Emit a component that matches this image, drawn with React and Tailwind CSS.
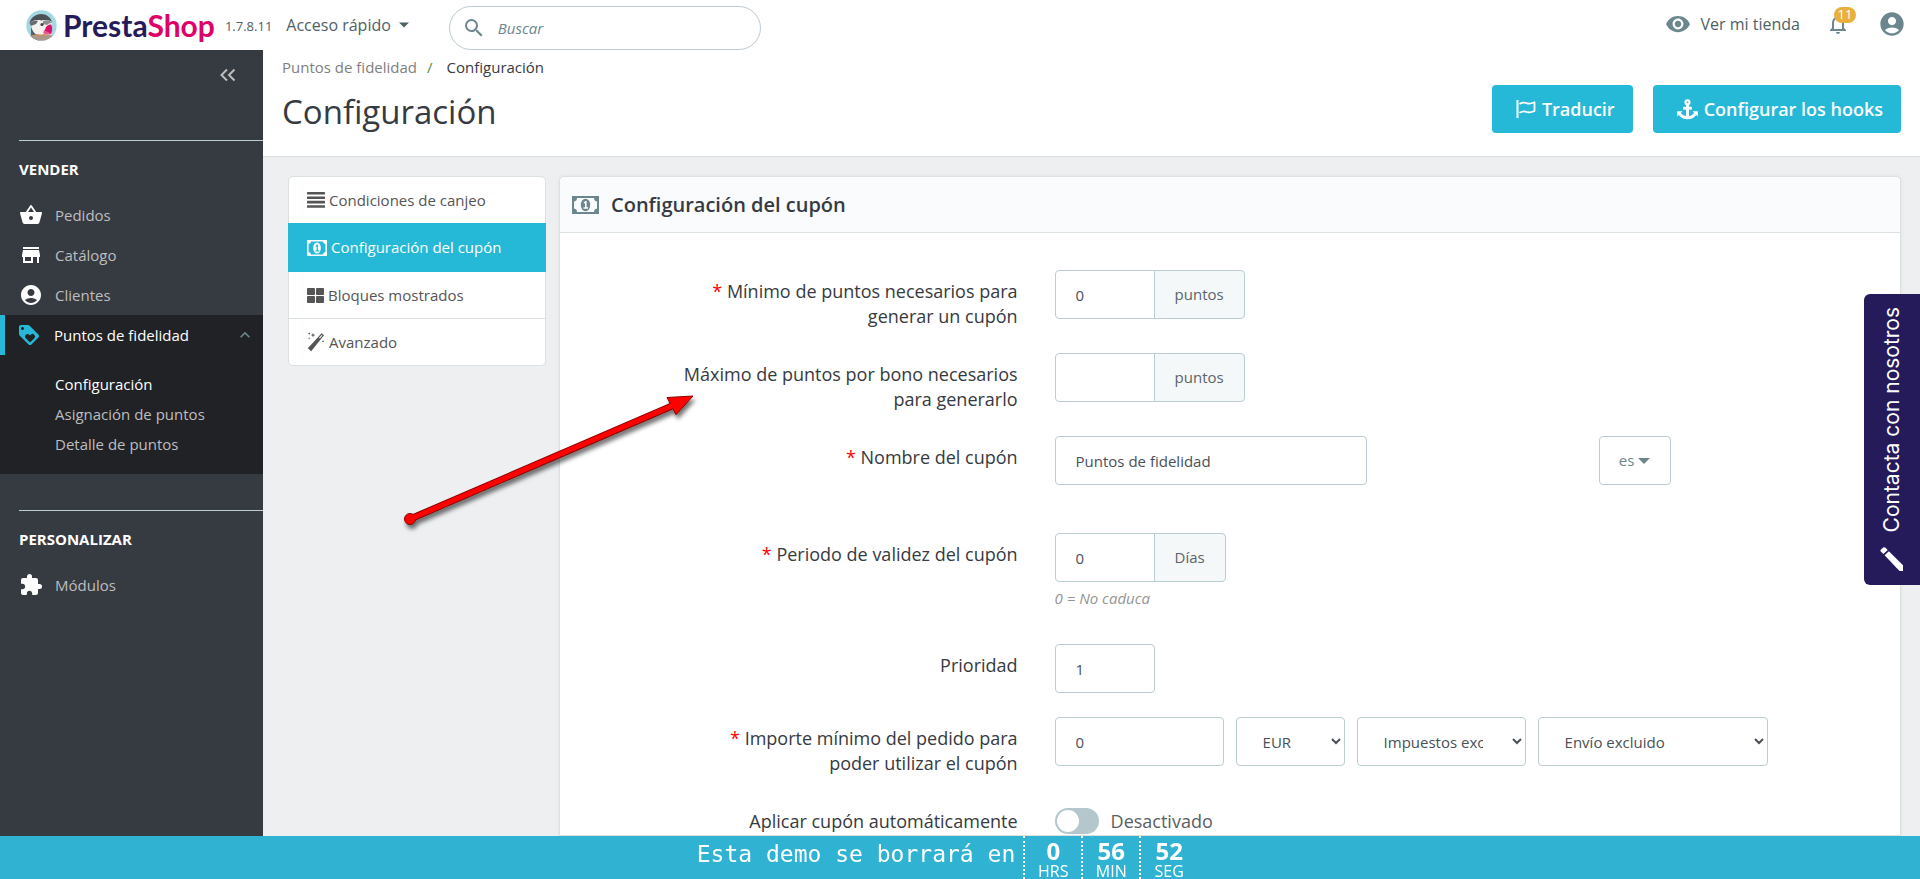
import {
  MdShoppingBasket,
  MdStore,
  MdAccountCircle,
  MdLoyalty,
  MdExtension,
  MdSearch,
  MdVisibility,
  MdNotificationsNone,
  MdKeyboardArrowUp,
} from "react-icons/md";
import { FaThLarge } from "react-icons/fa";

const inputClass =
  "h-[49px] rounded-[4px] border border-[#bbcdd2] bg-white px-5 text-[15px] text-[#495057] outline-none";
const selectClass =
  "h-[49px] rounded-[4px] border border-[#bbcdd2] bg-white pr-[26px] pl-[22px] text-[15px] text-[#495057] outline-none";

function LogoMark() {
  return (
    <svg viewBox="0 0 31 31" className="size-[31px]" aria-hidden="true">
      <defs>
        <clipPath id="disc">
          <circle cx="15.5" cy="15.5" r="15.2" />
        </clipPath>
      </defs>
      <g clipPath="url(#disc)">
        <rect width="31" height="31" fill="#a3d8e2" />
        <path d="M5 31V14c0-5 4-9.500 10-9.500 6.500 0 10.500 4 10.500 9v17z" fill="#f4f1ee" />
        <path d="M3.500 13C5 7.500 9.500 4 15 4c5.500 0 9.500 3 11 8-3-2-7-2.500-10.500-1.500C11 9.500 6.500 10.500 3.500 13z" fill="#4b5157" />
        <path d="M3.500 13c2.500-2 5.500-2.500 8.500-2l-2 3-5 2z" fill="#656b70" />
        <path d="M5 16c1 5 4 9 9 10l-1 5H5z" fill="#595f63" />
        <path d="M17 11c3-1.500 7-1 9 2-2 0-3.500.5-5 2l-4-1z" fill="#8d9092" />
        <circle cx="16" cy="14.500" r="1.600" fill="#3d4247" />
        <path d="M20 17c1.500-2 3-2.800 5-2.500 1.500 2 1.500 6 .2 9.500-3 .3-5.700-1-6.700-3z" fill="#d9136c" />
        <path d="M18 20c2.500 1.500 5 2 7.200 4-2 1-6 .8-8-1z" fill="#e9548e" />
        <path d="M3 25.500c6-1.500 18-1.500 25 0l-2 6H5z" fill="#a79a8c" />
        <path d="M9 26c1-1.500 3-1.500 4 0M16 26c1-1.500 3-1.500 4 0" stroke="#d9894c" strokeWidth="1.500" fill="none" />
      </g>
    </svg>
  );
}

function MoneyIcon({ className }) {
  return (
    <svg viewBox="0 0 27 18" className={className} aria-hidden="true">
      <path
        fill="currentColor"
        fillRule="evenodd"
        d="M0 0h27v18H0zM5 2a3.500 3.500 0 0 1-3 3.500v7A3.500 3.500 0 0 1 5 16h17a3.500 3.500 0 0 1 3-3.500v-7A3.500 3.500 0 0 1 22 2z"
      />
      <ellipse cx="13.500" cy="9" rx="4.700" ry="6.200" fill="currentColor" />
      <path d="M11.600 6.600 13.300 5h1.300v6.300H16v1.500h-4.500v-1.500H13V7.200l-.9.600z" fill="white" />
    </svg>
  );
}

function FlagIcon() {
  return (
    <svg viewBox="0 0 20 18" className="h-[18px] w-5" fill="none" stroke="currentColor" aria-hidden="true">
      <path d="M1.500.5v17" strokeWidth="2" strokeLinecap="round" />
      <path
        d="M3.500 4c2.500-1.500 4.500-1.800 7-.8 2.500 1 4.500.8 8-.9v8.700c-3.500 1.600-5.500 1.700-8 .8-2.500-1-4.500-.5-7 1"
        strokeWidth="1.800"
        strokeLinejoin="round"
      />
    </svg>
  );
}

function AnchorIcon() {
  return (
    <svg viewBox="0 0 21 21" className="size-[21px]" fill="none" stroke="currentColor" aria-hidden="true">
      <circle cx="10.500" cy="3.300" r="2" strokeWidth="2.200" />
      <path d="M10.500 5.500V18.500" strokeWidth="3" />
      <path d="M6.200 9.200h8.600" strokeWidth="2.800" />
      <path d="M2.600 14.500c1.500 2.600 4.300 4.200 7.900 4.200s6.400-1.600 7.900-4.200" strokeWidth="3" />
      <path d="M.2 12.300h5.300L.2 17.600zM20.800 12.300h-5.300l5.300 5.300z" fill="currentColor" stroke="none" />
    </svg>
  );
}

function BarsIcon() {
  return (
    <svg viewBox="0 0 18 16" className="h-4 w-[18px]" fill="currentColor" aria-hidden="true">
      <rect y="0" width="18" height="2.600" rx=".5" />
      <rect y="4.400" width="18" height="2.600" rx=".5" />
      <rect y="8.800" width="18" height="2.600" rx=".5" />
      <rect y="13.200" width="18" height="2.600" rx=".5" />
    </svg>
  );
}

function WandIcon() {
  return (
    <svg viewBox="0 0 18 20" className="h-5 w-[18px]" aria-hidden="true">
      <path d="M11.200 5 14.500 1.200 17 3.300 4.200 19.200.8 16.300z" fill="currentColor" />
      <path d="m12 5.800 2.600-2.900.8.700-2.500 2.900z" fill="white" />
      <path d="M6 .8l.6 1.700 1.700.6-1.700.6L6 5.400l-.6-1.700-1.700-.6 1.700-.6zM2.200.2l.4.9.9.4-.9.400-.4.900-.4-.9-.9-.4.900-.4zM2.200 5l.3.900.9.300-.9.400-.3.900-.4-.9-.9-.4.900-.3zM16 8l.4.900.9.400-.9.400-.4.900-.4-.9-.9-.4.900-.4z" fill="currentColor" />
    </svg>
  );
}

function Header() {
  return (
    <header className="flex h-[50px] shrink-0 items-center bg-white">
      <a href="#" className="ml-[26px] flex items-center gap-[6px]">
        <LogoMark />
        <span className="font-[Lato] text-[30px] leading-8 font-bold text-[#251b5b]">
          Presta<span className="text-[#df0067]">Shop</span>
        </span>
      </a>
      <span className="ml-[10px] pt-1 text-[13px] text-[#4e6167]">1.7.8.11</span>
      <button type="button" className="ml-[14px] flex items-center gap-2 text-base text-[#4e6167]">
        Acceso rápido
        <svg viewBox="0 0 10 6" className="h-[6px] w-[10px]" aria-hidden="true">
          <path d="M0 .5h10L5 5.500z" fill="currentColor" />
        </svg>
      </button>
      <label className="ml-10 flex h-11 w-[312px] items-center gap-3 self-end rounded-full border border-[#bbcdd2] px-3 text-[#6c868e]">
        <MdSearch className="size-6 shrink-0" />
        <input
          aria-label="Buscar"
          placeholder="Buscar"
          className="min-w-0 flex-1 text-[15px] italic outline-none placeholder:text-[#6c868e]"
        />
      </label>
      <div className="ml-auto flex items-center pr-[14px] pb-[2px] text-[#6c868e]">
        <a href="#" className="flex items-center gap-[10px] text-base">
          <MdVisibility className="size-[26px]" />
          <span className="text-[#4e6167]">Ver mi tienda</span>
        </a>
        <button type="button" aria-label="Notificaciones" className="relative ml-[26px]">
          <MdNotificationsNone className="size-6" />
          <span className="absolute -top-[5px] left-2 flex h-4 w-[22px] items-center justify-center rounded-full bg-[#eab03c] text-[13px] text-white">
            11
          </span>
        </button>
        <button type="button" aria-label="Cuenta" className="ml-7">
          <MdAccountCircle className="size-7" />
        </button>
      </div>
    </header>
  );
}

function NavItem({ icon: Icon, children }) {
  return (
    <a href="#" className="flex h-10 items-center gap-3 pl-[19px] text-[15px] text-[#bebebe]">
      <Icon className="size-6 text-white" />
      {children}
    </a>
  );
}

function Sidebar() {
  return (
    <nav className="w-[263px] shrink-0 bg-[#363a41] text-[15px]">
      <div className="flex h-[90px] justify-end pt-[18px] pr-[26px] text-[#bebebe]">
        <button type="button" aria-label="Contraer menú" className="h-[14px]">
          <svg viewBox="0 0 18 14" className="h-[14px] w-[18px]" fill="none" stroke="currentColor" strokeWidth="2" aria-hidden="true">
            <path d="M8 1.500 2.500 7 8 12.500M15.500 1.500 10 7l5.500 5.500" />
          </svg>
        </button>
      </div>
      <div className="ml-[19px] border-t border-[#bbcdd2]" />
      <h2 className="mt-4 mb-[14px] pl-[19px] leading-6 font-bold text-white">VENDER</h2>
      <NavItem icon={MdShoppingBasket}>Pedidos</NavItem>
      <NavItem icon={MdStore}>Catálogo</NavItem>
      <NavItem icon={MdAccountCircle}>Clientes</NavItem>
      <div className="mb-9 bg-[#202226] pb-[15px]">
        <a href="#" className="flex h-10 items-center gap-[13px] border-l-[5px] border-[#25b9d7] pr-2 pl-3 text-white">
          <MdLoyalty className="size-6 text-[#25b9d7]" />
          <span className="flex-1">Puntos de fidelidad</span>
          <MdKeyboardArrowUp className="size-5 text-[#6c868e]" />
        </a>
        <ul className="mt-[14px] pl-[55px] leading-[30px] text-[#bebebe]">
          <li><a href="#" className="text-white">Configuración</a></li>
          <li><a href="#">Asignación de puntos</a></li>
          <li><a href="#">Detalle de puntos</a></li>
        </ul>
      </div>
      <div className="ml-[19px] border-t border-[#bbcdd2]" />
      <h2 className="mt-4 mb-[14px] pl-[19px] leading-6 font-bold text-white">PERSONALIZAR</h2>
      <NavItem icon={MdExtension}>Módulos</NavItem>
    </nav>
  );
}

function PageHead() {
  const button =
    "flex h-12 items-center gap-[6px] rounded-[4px] bg-[#25b9d7] pr-[18px] pl-6 text-lg font-semibold text-white";
  return (
    <div className="flex h-[107px] items-start justify-between border-b border-[#dbdde0] bg-white pr-[19px] pl-[19px]">
      <div>
        <div className="mt-[5px] flex text-[15px] leading-6">
          <a href="#" className="text-[#7f7f80]">Puntos de fidelidad</a>
          <span className="mx-[10px] text-[#5a8a4a]">/</span>
          <span className="pl-1 text-[#363a41]">Configuración</span>
        </div>
        <h1 className="mt-[13px] text-[33px] leading-10 text-[#363a41]">Configuración</h1>
      </div>
      <div className="mt-[35px] flex gap-5">
        <button type="button" className={button}>
          <FlagIcon />
          Traducir
        </button>
        <button type="button" className={button}>
          <AnchorIcon />
          Configurar los hooks
        </button>
      </div>
    </div>
  );
}

function Tabs() {
  const row = "flex items-center gap-1 px-[18px] text-[15px]";
  return (
    <div className="flex w-[258px] shrink-0 flex-col self-start rounded-[5px] border border-[#dbe0e3] bg-white text-[#555]">
      <a href="#" className={row + " h-[46px]"}>
        <BarsIcon />
        Condiciones de canjeo
      </a>
      <a href="#" className="-mx-px flex h-[49px] items-center gap-1 bg-[#25b9d7] px-[19px] text-[15px] text-white">
        <svg viewBox="0 0 20 16" className="h-4 w-5" aria-hidden="true">
          <path
            fill="currentColor"
            fillRule="evenodd"
            d="M0 0h20v16H0zM4 1.600A2.600 2.600 0 0 1 1.600 4v8A2.600 2.600 0 0 1 4 14.400h12A2.600 2.600 0 0 1 18.400 12V4A2.600 2.600 0 0 1 16 1.600z"
          />
          <ellipse cx="10" cy="8" rx="3.800" ry="5.500" fill="currentColor" />
          <path d="M8.400 5.900 9.800 4.600h1.100v5.700h1.100v1.200H8.400v-1.200h1.200V6.600l-.6.400z" fill="#25b9d7" />
        </svg>
        Configuración del cupón
      </a>
      <a href="#" className={row + " h-[46px]"}>
        <FaThLarge className="size-[17px]" />
        Bloques mostrados
      </a>
      <a href="#" className={row + " h-[47px] border-t border-[#dbe0e3]"}>
        <WandIcon />
        Avanzado
      </a>
    </div>
  );
}

function Field({ id, label, required, className, children }) {
  return (
    <div className={"flex items-start gap-[37px] " + className}>
      <div className="flex w-[34%] shrink-0 justify-end">
        <label htmlFor={id} className="max-w-[340px] pt-[9px] text-right text-lg leading-[25px] text-[#363a41]">
          {required && <span className="text-[#f00]">* </span>}
          {label}
        </label>
      </div>
      <div className="min-w-0 flex-1">{children}</div>
    </div>
  );
}

function Unit({ children }) {
  return (
    <span className="-ml-px flex h-[49px] items-center rounded-r-[4px] border border-[#bbcdd2] bg-[#f4f8f9] px-5 text-[15px] text-[#5d6468]">
      {children}
    </span>
  );
}

function CouponForm() {
  const joined =
    "h-[49px] w-[100px] rounded-l-[4px] border border-[#bbcdd2] bg-white px-5 text-[15px] text-[#495057] outline-none";
  return (
    <section className="min-w-0 flex-1 rounded-t-[5px] border border-[#dbe0e3] bg-white shadow-[0_0_4px_rgba(0,0,0,0.06)]">
      <h2 className="flex h-14 items-center gap-3 rounded-t-[5px] border-b border-[#dbe0e3] bg-[#fafbfc] pl-3 text-xl font-semibold text-[#363a41]">
        <MoneyIcon className="h-[18px] w-[27px] text-[#6c868e]" />
        Configuración del cupón
      </h2>
      <form className="flex flex-col pt-[37px] pl-[3px]">
        <Field id="min" label="Mínimo de puntos necesarios para generar un cupón" required className="mb-6">
          <div className="flex">
            <input id="min" defaultValue="0" className={joined} />
            <Unit>puntos</Unit>
          </div>
        </Field>
        <Field id="max" label="Máximo de puntos por bono necesarios para generarlo" className="mb-6">
          <div className="flex">
            <input id="max" className={joined} />
            <Unit>puntos</Unit>
          </div>
        </Field>
        <Field id="name" label="Nombre del cupón" required className="mb-12">
          <div className="flex gap-3">
            <div className="w-full max-w-[532px]">
              <input id="name" defaultValue="Puntos de fidelidad" className={inputClass + " w-[312px]"} />
            </div>
            <button
              type="button"
              className="flex h-[49px] w-[72px] shrink-0 items-center justify-center rounded-[4px] border border-[#bbcdd2] text-[15px] font-medium text-[#6c868e]"
            >
              es
              <svg viewBox="0 0 12 6" className="ml-1 h-[6px] w-3" aria-hidden="true">
                <path d="M0 0h12L6 6z" fill="currentColor" />
              </svg>
            </button>
          </div>
        </Field>
        <Field id="validity" label="Periodo de validez del cupón" required className="mb-9">
          <div className="flex">
            <input id="validity" defaultValue="0" className={joined} />
            <Unit>Días</Unit>
          </div>
          <p className="mt-[6px] text-[15px] leading-5 text-[#959595] italic">0 = No caduca</p>
        </Field>
        <Field id="priority" label="Prioridad" className="mb-6">
          <input id="priority" defaultValue="1" className={inputClass + " w-[100px]"} />
        </Field>
        <Field id="amount" label="Importe mínimo del pedido para poder utilizar el cupón" required className="mb-6">
          <div className="flex gap-3">
            <input id="amount" defaultValue="0" className={inputClass + " w-[169px]"} />
            <select aria-label="Moneda" className={selectClass + " w-[109px]"}>
              <option>EUR</option>
            </select>
            <select aria-label="Impuestos" className={selectClass + " w-[169px]"}>
              <option>Impuestos excluidos</option>
            </select>
            <select aria-label="Envío" className={selectClass + " w-[230px]"}>
              <option>Envío excluido</option>
            </select>
          </div>
        </Field>
        <Field id="auto" label="Aplicar cupón automáticamente" className="">
          <div className="flex items-center gap-3 pt-2">
            <input
              id="auto"
              type="checkbox"
              role="switch"
              className="h-[26px] w-11 appearance-none rounded-full bg-[#b3c7cd] before:m-[2px] before:block before:size-[22px] before:rounded-full before:bg-white"
            />
            <span className="text-lg leading-6 text-[#5a5e63]">Desactivado</span>
          </div>
        </Field>
      </form>
    </section>
  );
}

function Arrow() {
  return (
    <svg
      viewBox="0 0 300 140"
      className="pointer-events-none absolute top-[338px] left-[138px] h-[140px] w-[300px] overflow-visible"
      aria-hidden="true"
    >
      <g style={{ filter: "drop-shadow(2px 4px 2px rgba(0,0,0,0.55))" }}>
        <path d="M9 131 271 18" stroke="#8e0000" strokeWidth="7" />
        <circle cx="9" cy="131" r="5.500" fill="#f00" stroke="#8e0000" />
        <path d="M266 9.500 292 8l-17 18.700z" fill="#f00" stroke="#8e0000" />
        <path d="M9 131 273 17" stroke="#f00" strokeWidth="5" />
      </g>
    </svg>
  );
}

function ContactTab() {
  return (
    <a
      href="#"
      className="fixed top-[294px] right-0 flex h-[291px] w-14 flex-col items-center justify-between rounded-l-[6px] bg-[#251b5b] pt-[13px] pb-[14px] text-white"
    >
      <span className="rotate-180 font-[Inter] text-[21px] leading-6 [writing-mode:vertical-rl]">
        Contacta con nosotros
      </span>
      <svg viewBox="0 0 24 24" className="size-6" fill="currentColor" aria-hidden="true">
        <path d="M1.200 2.200 3 .7c.8-.6 1.800-.6 2.500.1l2.200 2.300-4.300 4L1 4.800c-.8-.8-.7-1.900.2-2.600z" />
        <path d="m4.600 8.200 4.300-4L23 18.200V24h-3.500z" />
      </svg>
    </a>
  );
}

function Countdown() {
  const parts = [
    ["0", "HRS"],
    ["56", "MIN"],
    ["52", "SEG"],
  ];
  return (
    <footer className="sticky bottom-0 flex h-[43px] shrink-0 justify-center bg-[#30b3d2] pr-[26px] text-white">
      <p className="pt-1 pr-2 font-[DejaVu_Sans_Mono,monospace] text-[23px] leading-7">Esta demo se borrará en</p>
      {parts.map(([value, unit]) => (
        <div key={unit} className="flex w-[58px] flex-col items-center border-l-2 border-dotted border-white">
          <span className="pt-[3px] text-2xl leading-6 font-bold">{value}</span>
          <span className="text-base leading-4">{unit}</span>
        </div>
      ))}
    </footer>
  );
}

export default function App() {
  return (
    <div className="flex min-h-screen flex-col bg-[#eeeff1] font-[Open_Sans,sans-serif]">
      <Header />
      <div className="flex flex-1">
        <Sidebar />
        <main className="relative flex min-w-0 flex-1 flex-col">
          <PageHead />
          <div className="flex flex-1 gap-[13px] pt-[19px] pr-[19px] pl-[25px]">
            <Tabs />
            <CouponForm />
          </div>
          <Arrow />
        </main>
      </div>
      <ContactTab />
      <Countdown />
    </div>
  );
}
